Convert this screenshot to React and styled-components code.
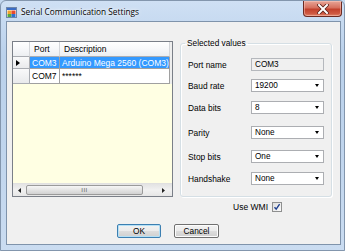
import React from 'react';
import styled, { createGlobalStyle } from 'styled-components';

const GlobalStyle = createGlobalStyle`
    html, body {
        margin: 0;
        padding: 0;
        background: #c4d8ef;
    }
    * {
        box-sizing: border-box;
    }
`;

const Window = styled.div`
    width: 345px;
    height: 251px;
    display: flex;
    flex-direction: column;
    border: 1px solid #8396ad;
    border-radius: 6px 6px 0 0;
    background: linear-gradient(180deg, #cfe0f4 0%, #bad1eb 22%, #c0d5ed 60%, #cadcf1 100%);
    font-family: "Liberation Sans", Arial, sans-serif;
    color: #000;
    overflow: hidden;
`;

const TitleBar = styled.div`
    height: 20px;
    display: flex;
    align-items: flex-start;
    padding-left: 5px;
    flex-shrink: 0;
`;

const TitleIcon = styled.svg`
    width: 11px;
    height: 11px;
    margin-top: 6px;
`;

const TitleText = styled.span`
    margin: 5px 0 0 4px;
    font-family: "Open Sans", "Noto Sans", sans-serif;
    font-size: 8.3px;
    line-height: 12px;
    text-shadow: 0 0 5px rgba(255, 255, 255, 0.95), 0 0 2px rgba(255, 255, 255, 0.9);
`;

const CloseButton = styled.div`
    margin-left: auto;
    margin-right: 2px;
    width: 39px;
    height: 16px;
    border: 1px solid #6b2a22;
    border-top: none;
    border-radius: 0 0 4px 4px;
    background: linear-gradient(180deg, #e7a698 0%, #d6705e 45%, #c2412c 55%, #cf5a43 85%, #e08a6f 100%);
    display: flex;
    align-items: center;
    justify-content: center;
    box-shadow: inset 0 0 0 1px rgba(255, 210, 200, 0.45);
`;

const Client = styled.div`
    flex: 1;
    margin: 0 3px 5px 5px;
    border: 1px solid #7f93ab;
    background: #f0f0f0;
    display: flex;
    flex-direction: column;
    padding: 0 8px 0 5px;
`;

const TopRow = styled.div`
    display: flex;
    gap: 7px;
    margin-top: 19px;
    align-items: flex-start;
`;

const Grid = styled.div`
    width: 161px;
    height: 156px;
    border: 1px solid #7a7f88;
    background: #ffffe3;
    display: flex;
    flex-direction: column;
    font-size: 8.5px;
    overflow: hidden;
`;

const GridRow = styled.div`
    display: grid;
    grid-template-columns: 17px 30px 110px 2px;
    height: ${p => p.$h}px;
    flex-shrink: 0;
`;

const HeadCell = styled.div`
    background: linear-gradient(180deg, #ffffff 0%, #f7f8fa 50%, #eceef1 100%);
    border-right: 1px solid #d5d7db;
    border-bottom: 1px solid #a9acb2;
    display: flex;
    align-items: center;
    padding-left: 4px;
    white-space: nowrap;
`;

const RowHead = styled.div`
    background: linear-gradient(180deg, #f9f9fa 0%, #e9eaec 100%);
    border-right: 1px solid #a9acb2;
    border-bottom: 1px solid #a9acb2;
    display: flex;
    align-items: center;
    padding-left: 3px;
`;

const Cell = styled.div`
    background: ${p => (p.$sel ? '#3399ff' : '#ffffff')};
    color: ${p => (p.$sel ? '#ffffff' : '#000000')};
    border-right: 1px solid #a0a0a0;
    border-bottom: 1px solid #a0a0a0;
    display: flex;
    align-items: center;
    padding-left: 2px;
    white-space: nowrap;
    overflow: hidden;
`;

const Gutter = styled.div`
    background: #eeeeee;
`;

const GridFill = styled.div`
    flex: 1;
`;

const HScroll = styled.div`
    height: 13px;
    display: flex;
    align-items: stretch;
    background: linear-gradient(180deg, #e3e3e3 0%, #f1f1f1 50%, #e6e6e6 100%);
    border-top: 1px solid #e0e0e0;
    padding-right: 2px;
`;

const ScrollArrow = styled.div`
    width: 13px;
    display: flex;
    align-items: center;
    justify-content: center;
`;

const Thumb = styled.div`
    width: 117px;
    margin: 1px 0;
    border: 1px solid #9a9a9a;
    border-radius: 2px;
    background: linear-gradient(180deg, #f6f6f6 0%, #e4e4e4 50%, #d2d2d2 100%);
    display: flex;
    align-items: center;
    justify-content: center;
    font-size: 6px;
    letter-spacing: 0.5px;
    color: #555;
`;

const Track = styled.div`
    flex: 1;
`;

const GroupBox = styled.fieldset`
    width: 152px;
    height: 159px;
    margin: -3px 0 0;
    padding: 0 7px;
    border: 1px solid #d5dfe5;
    border-radius: 3px;
    box-shadow: inset 1px 1px 0 #fff, 1px 1px 0 #fff;
    min-width: 0;
`;

const Legend = styled.legend`
    padding: 0 2px;
    margin-left: -3px;
    font-size: 8.3px;
    line-height: 10px;
`;

const Field = styled.div`
    display: grid;
    grid-template-columns: 63px 73px;
    align-items: center;
    margin-top: ${p => p.$gap}px;
    height: 13px;
`;

const Label = styled.span`
    font-size: 8.4px;
    white-space: nowrap;
`;

const TextBox = styled.div`
    height: 13px;
    border: 1px solid #b5b8bd;
    background: #f0f0f0;
    font-size: 8.2px;
    display: flex;
    align-items: center;
    padding-left: 3px;
`;

const Combo = styled.div`
    height: 13px;
    border: 1px solid #acaeb2;
    background: #fff;
    font-size: 8.2px;
    display: flex;
    align-items: center;
    justify-content: space-between;
    padding: 0 3px 0 3px;
`;

const Arrow = styled.span`
    width: 0;
    height: 0;
    border-left: 2.5px solid transparent;
    border-right: 2.5px solid transparent;
    border-top: 3px solid #000;
    margin-right: 1px;
`;

const WmiRow = styled.div`
    display: flex;
    justify-content: flex-end;
    align-items: center;
    gap: 4px;
    margin-top: 5px;
    padding-right: 50px;
    font-size: 8.5px;
`;

const CheckBox = styled.div`
    width: 10px;
    height: 10px;
    border: 1px solid #8e8f8f;
    background: linear-gradient(135deg, #dcdcdc 0%, #fbfbfb 100%);
    display: flex;
    align-items: center;
    justify-content: center;
`;

const ButtonRow = styled.div`
    display: flex;
    gap: 13px;
    margin-top: 12px;
    padding-left: 105px;
`;

const Button = styled.div`
    width: ${p => p.$w}px;
    height: 14px;
    border: 1px solid ${p => (p.$default ? '#3c7fb1' : '#707070')};
    border-radius: 2px;
    background: linear-gradient(180deg, #f2f2f2 0%, #ebebeb 48%, #dddddd 52%, #cfcfcf 100%);
    box-shadow: inset 0 0 0 1px ${p => (p.$default ? '#b4e0f6' : '#fcfcfc')};
    font-size: 8.3px;
    display: flex;
    align-items: center;
    justify-content: center;
`;

const fields = [
    { label: 'Baud rate', value: '19200', gap: 8 },
    { label: 'Data bits', value: '8', gap: 9 },
    { label: 'Parity', value: 'None', gap: 12 },
    { label: 'Stop bits', value: 'One', gap: 11 },
    { label: 'Handshake', value: 'None', gap: 9 },
];

const ports = [
    { port: 'COM3', desc: 'Arduino Mega 2560 (COM3)', sel: true, h: 12 },
    { port: 'COM7', desc: '******', sel: false, h: 15 },
];

const App = () => {
    return (
        <Window>
            <GlobalStyle />
            <TitleBar>
                <TitleIcon viewBox="0 0 11 11">
                    <rect x="0.5" y="0.5" width="10" height="10" fill="#fff" stroke="#6f86a8" />
                    <rect x="1" y="1" width="9" height="2" fill="#3b6cc4" />
                    <rect x="1.5" y="3.5" width="4" height="3.5" fill="#f2a22a" />
                    <rect x="5.5" y="3.5" width="4" height="3.5" fill="#e64b2e" />
                    <rect x="1.5" y="7" width="4" height="3" fill="#5aa83c" />
                    <rect x="5.5" y="7" width="4" height="3" fill="#2f6fd0" />
                </TitleIcon>
                <TitleText>Serial Communication Settings</TitleText>
                <CloseButton>
                    <svg width="12" height="10" viewBox="0 0 12 10">
                        <path d="M2 1 L10 9 M10 1 L2 9" stroke="#5a2018" strokeWidth="3.6" strokeLinecap="square" />
                        <path d="M2 1 L10 9 M10 1 L2 9" stroke="#ffffff" strokeWidth="2" strokeLinecap="square" />
                    </svg>
                </CloseButton>
            </TitleBar>
            <Client>
                <TopRow>
                    <Grid>
                        <GridRow $h={15}>
                            <HeadCell />
                            <HeadCell>Port</HeadCell>
                            <HeadCell>Description</HeadCell>
                            <Gutter />
                        </GridRow>
                        {ports.map(p => (
                            <GridRow $h={p.h} key={p.port}>
                                <RowHead>
                                    {p.sel && (
                                        <svg width="4" height="6" viewBox="0 0 4 6">
                                            <path d="M0 0 L4 3 L0 6 Z" fill="#000" />
                                        </svg>
                                    )}
                                </RowHead>
                                <Cell $sel={p.sel}>{p.port}</Cell>
                                <Cell $sel={p.sel}>{p.desc}</Cell>
                                <Gutter />
                            </GridRow>
                        ))}
                        <GridFill />
                        <HScroll>
                            <ScrollArrow>
                                <svg width="3" height="5" viewBox="0 0 3 5">
                                    <path d="M3 0 L0 2.5 L3 5 Z" fill="#222" />
                                </svg>
                            </ScrollArrow>
                            <Thumb>III</Thumb>
                            <Track />
                            <ScrollArrow>
                                <svg width="3" height="5" viewBox="0 0 3 5">
                                    <path d="M0 0 L3 2.5 L0 5 Z" fill="#222" />
                                </svg>
                            </ScrollArrow>
                        </HScroll>
                    </Grid>
                    <GroupBox>
                        <Legend>Selected values</Legend>
                        <Field $gap={10}>
                            <Label>Port name</Label>
                            <TextBox>COM3</TextBox>
                        </Field>
                        {fields.map(f => (
                            <Field $gap={f.gap} key={f.label}>
                                <Label>{f.label}</Label>
                                <Combo>
                                    {f.value}
                                    <Arrow />
                                </Combo>
                            </Field>
                        ))}
                    </GroupBox>
                </TopRow>
                <WmiRow>
                    Use WMI
                    <CheckBox>
                        <svg width="8" height="8" viewBox="0 0 8 8">
                            <path d="M1.5 4.2 L3.2 6.2 L6.6 1.2" stroke="#1d3f8f" strokeWidth="1.4" fill="none" />
                        </svg>
                    </CheckBox>
                </WmiRow>
                <ButtonRow>
                    <Button $w={44} $default>OK</Button>
                    <Button $w={45}>Cancel</Button>
                </ButtonRow>
            </Client>
        </Window>
    );
};

export default App;
